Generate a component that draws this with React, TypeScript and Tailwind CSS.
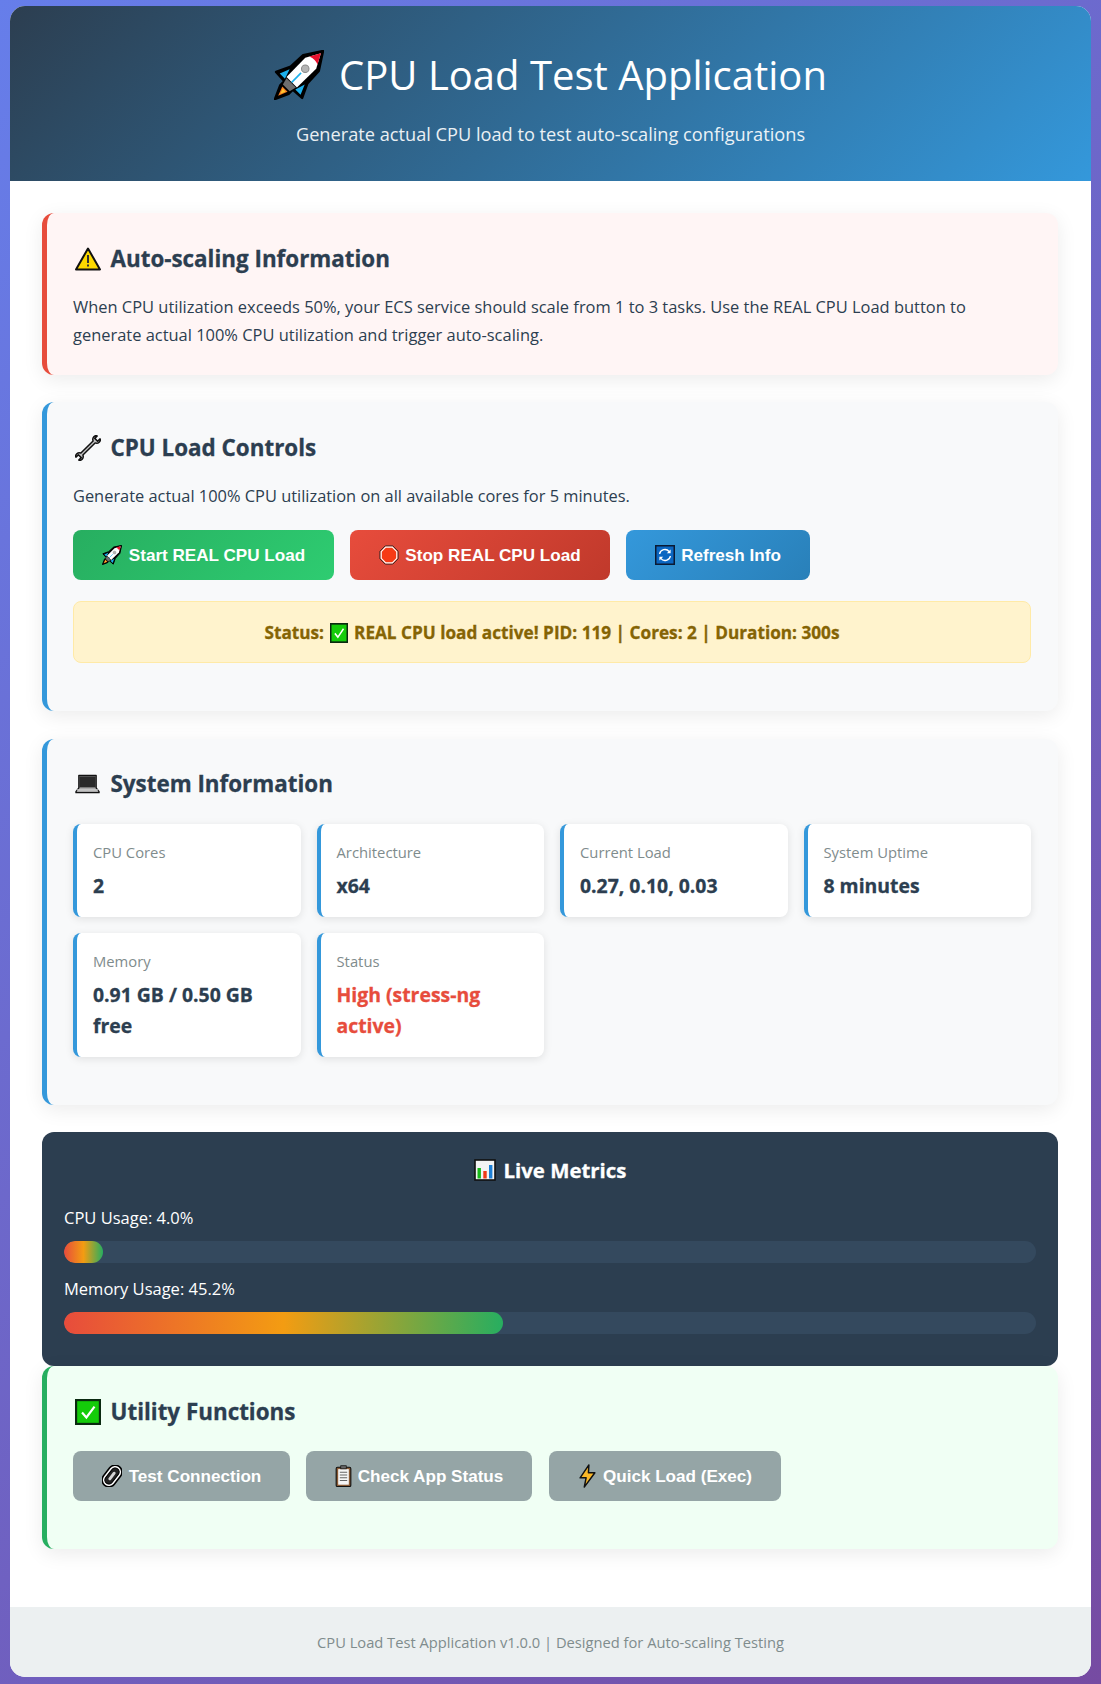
import React from "react";

type IconProps = { className?: string };

const Rocket = ({ className }: IconProps) => (
  <svg viewBox="0 0 48 48" className={className}>
    <path d="M47 1 L28 5 L16 16 L2 21 L10 30 L6 34 L1 47 L14 42 L18 38 L27 46 L32 32 L43 20 Z" fill="#000" stroke="#000" strokeWidth="2.4" strokeLinejoin="round" />
    <path d="M45 3 L30 7.5 L12 26 L22 36 L40.5 18 Z" fill="#fff" />
    <path d="M45 3 L34 6.2 Q40 9 41.8 14 Z" fill="#e8112d" />
    <path d="M15 18.5 L5.5 22.5 L10.5 27.5 Z M29.5 33 L25.5 43 L20.5 38 Z" fill="#1cb0ec" />
    <path d="M12 27 L21 36 L15 39.5 L8.5 33 Z" fill="#6e6e6e" />
    <path d="M8 35 L4 44 L13 40 Z" fill="#f47b20" />
    <path d="M8.5 37 L6 42 L11 40 Z" fill="#fdc82f" />
    <circle cx="30" cy="18" r="3.6" fill="#b5b5b5" stroke="#8a8a8a" />
    <path d="M17 31 L26 22" stroke="#1cb0ec" strokeWidth="1.6" />
  </svg>
);

const Warning = ({ className }: IconProps) => (
  <svg viewBox="0 0 26 24" className={className}>
    <path d="M13 1.5 L25 22.5 L1 22.5 Z" fill="#fcd800" stroke="#111" strokeWidth="2" strokeLinejoin="round" />
    <rect x="12" y="8" width="2" height="8" fill="#333" />
    <rect x="12" y="17.5" width="2" height="2" fill="#333" />
  </svg>
);

const Wrench = ({ className }: IconProps) => (
  <svg viewBox="0 0 26 26" className={className}>
    <g transform="rotate(45 13 13)">
      <path d="M11 -2 C8.6 -1.2 8.4 3 11.6 4.4 L11.6 21.6 C8.4 23 8.6 27.2 11 28 L11 24.6 L15 24.6 L15 28 C17.4 27.2 17.6 23 14.4 21.6 L14.4 4.4 C17.6 3 17.4 -1.2 15 -2 L15 1.4 L11 1.4 Z" fill="#c4c4c4" stroke="#111" strokeWidth="1.5" strokeLinejoin="round" />
    </g>
  </svg>
);

const Stop = ({ className }: IconProps) => (
  <svg viewBox="0 0 20 20" className={className}>
    <path d="M6.2 1 L13.8 1 L19 6.2 L19 13.8 L13.8 19 L6.2 19 L1 13.8 L1 6.2 Z" fill="#f63a16" stroke="#222" strokeWidth="1" />
    <path d="M6.7 2.2 L13.3 2.2 L17.8 6.7 L17.8 13.3 L13.3 17.8 L6.7 17.8 L2.2 13.3 L2.2 6.7 Z" fill="#f63a16" stroke="#fff" strokeWidth="1.2" />
  </svg>
);

const Refresh = ({ className }: IconProps) => (
  <svg viewBox="0 0 20 20" className={className}>
    <rect x="0.75" y="0.75" width="18.5" height="18.5" fill="#0a66c2" stroke="#0b1a33" strokeWidth="1.5" />
    <path d="M4.6 9 A5.4 5.4 0 0 1 14.2 6.6" fill="none" stroke="#fff" strokeWidth="1.4" />
    <path d="M15.6 4.4 L15.6 8.2 L11.8 8.2 Z" fill="#fff" />
    <path d="M15.4 11 A5.4 5.4 0 0 1 5.8 13.4" fill="none" stroke="#fff" strokeWidth="1.4" />
    <path d="M4.4 15.6 L4.4 11.8 L8.2 11.8 Z" fill="#fff" />
  </svg>
);

const Check = ({ className }: IconProps) => (
  <svg viewBox="0 0 24 24" preserveAspectRatio="none" className={className}>
    <rect x="1" y="1" width="22" height="22" fill="#14cc0a" stroke="#0a2a10" strokeWidth="2" />
    <path d="M6.5 12.5 L10.5 17 L18 7" fill="none" stroke="#fff" strokeWidth="2" />
  </svg>
);

const Laptop = ({ className }: IconProps) => (
  <svg viewBox="0 0 26 20" className={className}>
    <path d="M4 1 L22 1 L22 14 L25 18 L25 19 L1 19 L1 18 L4 14 Z" fill="#aaa" stroke="#111" strokeWidth="1.4" strokeLinejoin="round" />
    <rect x="4.5" y="2" width="17" height="11.5" fill="#2a2a2a" />
    <rect x="2" y="15.5" width="22" height="1.4" fill="#d0d0d0" />
  </svg>
);

const Chart = ({ className }: IconProps) => (
  <svg viewBox="0 0 22 22" className={className}>
    <rect x="1" y="1" width="20" height="20" fill="#f4f4f4" stroke="#111" strokeWidth="1.6" />
    <rect x="3.5" y="9" width="3.4" height="10.5" fill="#18b818" />
    <rect x="9.3" y="12" width="3.4" height="7.5" fill="#f03a16" />
    <rect x="15" y="6" width="3.4" height="13.5" fill="#1d7fd6" />
  </svg>
);

const Link = ({ className }: IconProps) => (
  <svg viewBox="0 0 22 24" className={className}>
    <g transform="rotate(-52 11 12)" fill="none">
      <rect x="-2" y="4.5" width="26" height="15" rx="7.5" fill="#fff" stroke="#000" strokeWidth="1.8" />
      <rect x="1" y="7.6" width="20" height="8.8" rx="4.4" fill="#222" stroke="#000" strokeWidth="1.2" />
      <rect x="5.5" y="10.4" width="11" height="3.2" rx="1.6" fill="#d5d5d5" />
    </g>
  </svg>
);

const Clipboard = ({ className }: IconProps) => (
  <svg viewBox="0 0 18 24" className={className}>
    <rect x="1" y="2.5" width="16" height="21" rx="1.5" fill="#8a5a34" stroke="#111" strokeWidth="1.2" />
    <rect x="3.2" y="4.5" width="11.6" height="17" fill="#f6f6f6" />
    <rect x="6" y="0.8" width="6" height="3.4" fill="#666" stroke="#111" strokeWidth="0.8" />
    <path d="M5 8 H13 M5 11 H13 M5 14 H13 M5 17 H13" stroke="#666" strokeWidth="1.1" />
  </svg>
);

const Bolt = ({ className }: IconProps) => (
  <svg viewBox="0 0 20 26" className={className}>
    <path d="M11.5 1 L2 15 L8.5 15 L6.5 25 L18 9.5 L11 9.5 Z" fill="#fbb827" stroke="#111" strokeWidth="1.6" strokeLinejoin="round" />
  </svg>
);

const Heading = ({ icon, children }: { icon: React.ReactNode; children: React.ReactNode }) => (
  <h2 className="flex items-center h-9 mb-[15px] text-[22.4px] leading-9 font-bold [-webkit-text-stroke:0.3px] text-[#2c3e50]">
    <span className="w-[37.5px] flex items-center pl-[2px]">{icon}</span>
    {children}
  </h2>
);

const Btn = ({ icon, label, cls }: { icon: React.ReactNode; label: string; cls: string }) => (
  <button className={`h-[50px] rounded-lg flex items-center justify-center font-['Liberation_Sans',Arial,sans-serif] font-bold text-[17.1px] text-white ${cls}`}>
    {icon}
    <span className="pt-[2px]">{label}</span>
  </button>
);

const Card = ({ label, value, red }: { label: string; value: string; red?: boolean }) => (
  <div className="bg-white rounded-lg border-l-4 border-[#3498db] pl-4 pr-3 pt-[17px] pb-[16px] shadow-[0_2px_8px_rgba(0,0,0,0.1)]">
    <div className="text-[14.8px] leading-[23px] mb-[6px] text-[#7f8c8d]">{label}</div>
    <div className={`text-[19.4px] leading-[31px] font-bold [-webkit-text-stroke:0.3px] ${red ? "text-[#e74c3c]" : "text-[#2c3e50]"}`}>{value}</div>
  </div>
);

const sectionBase = "rounded-xl border-l-[5px] shadow-[0_5px_20px_rgba(0,0,0,0.08)]";

export default function App() {
  return (
    <div className="w-full min-h-[1684px] pt-[6px] px-[10px] bg-[linear-gradient(135deg,#667eea_0%,#764ba2_100%)] font-['Open_Sans',sans-serif]">
      <div className="bg-white rounded-[15px] overflow-hidden h-[1671px] flex flex-col">
        <header className="h-[175px] shrink-0 bg-[linear-gradient(135deg,#2c3e50,#3498db)] text-white flex flex-col items-center pt-[37px]">
          <h1 className="flex items-center h-[64px] text-[40px] font-normal">
            <Rocket className="w-[50px] h-[50px] mr-[15px] -mt-[1px]" />
            CPU Load Test Application
          </h1>
          <p className="mt-[13px] text-[18.2px] leading-7 opacity-90">Generate actual CPU load to test auto-scaling configurations</p>
        </header>

        <main className="flex-1 pl-[32px] pr-[33px] pt-[32px]">
          <section className={`${sectionBase} h-[162px] bg-[#fff5f5] border-[#e74c3c] pl-[26px] pr-[60px] pt-[28px] mb-[27px]`}>
            <Heading icon={<Warning className="w-[26px] h-[24px]" />}>Auto-scaling Information</Heading>
            <p className="pt-[1px] text-[16.45px] leading-[28px] text-[#2c3e50]">
              When CPU utilization exceeds 50%, your ECS service should scale from 1 to 3 tasks. Use the REAL CPU Load button to generate actual 100% CPU utilization and trigger auto-scaling.
            </p>
          </section>

          <section className={`${sectionBase} h-[309px] bg-[#f8f9fa] border-[#3498db] pl-[26px] pr-[27px] pt-[28px] mb-[28px]`}>
            <Heading icon={<Wrench className="w-[26px] h-[26px]" />}>CPU Load Controls</Heading>
            <p className="pt-[1px] text-[16.4px] leading-[28px] text-[#2c3e50] mb-[20px]">
              Generate actual 100% CPU utilization on all available cores for 5 minutes.
            </p>
            <div className="flex gap-4">
              <Btn cls="w-[261px] bg-[linear-gradient(135deg,#27ae60,#2ecc71)]" icon={<Rocket className="w-[20px] h-[20px] mr-[7px]" />} label="Start REAL CPU Load" />
              <Btn cls="w-[260px] bg-[linear-gradient(135deg,#e74c3c,#c0392b)]" icon={<Stop className="w-[20px] h-[20px] mr-[6px]" />} label="Stop REAL CPU Load" />
              <Btn cls="w-[184px] bg-[linear-gradient(135deg,#3498db,#2980b9)]" icon={<Refresh className="w-[20px] h-[20px] mr-[6px]" />} label="Refresh Info" />
            </div>
            <div className="mt-[21px] pt-[2px] h-[62px] rounded-lg border border-[#ffeaa7] bg-[#fff3cd] flex items-center justify-center text-[17.2px] font-bold [-webkit-text-stroke:0.3px] text-[#856404]">
              Status:
              <Check className="w-[18px] h-[20px] mx-[6px]" />
              REAL CPU load active! PID: 119 | Cores: 2 | Duration: 300s
            </div>
          </section>

          <section className={`${sectionBase} h-[366px] bg-[#f8f9fa] border-[#3498db] pl-[26px] pr-[27px] pt-[27px] mb-[27px]`}>
            <Heading icon={<Laptop className="w-[25px] h-[20px]" />}>System Information</Heading>
            <div className="grid grid-cols-4 gap-x-[16px] gap-y-[16px] pt-[7px]">
              <Card label="CPU Cores" value="2" />
              <Card label="Architecture" value="x64" />
              <Card label="Current Load" value="0.27, 0.10, 0.03" />
              <Card label="System Uptime" value="8 minutes" />
              <Card label="Memory" value="0.91 GB / 0.50 GB free" />
              <Card label="Status" value="High (stress-ng active)" red />
            </div>
          </section>

          <section className="h-[234px] rounded-xl bg-[#2c3e50] text-white px-[22px] pt-[22px]">
            <h3 className="flex items-center justify-center h-8 text-[20.4px] font-bold [-webkit-text-stroke:0.3px]">
              <Chart className="w-[22px] h-[22px] mr-[8px]" />
              Live Metrics
            </h3>
            <div className="mt-[18px] text-[16.5px] leading-[28px]">CPU Usage: 4.0%</div>
            <div className="mt-[9px] h-[22px] rounded-full bg-[#34495e] overflow-hidden">
              <div className="h-full rounded-full bg-[linear-gradient(90deg,#e74c3c,#f39c12,#27ae60)]" style={{ width: "4%" }} />
            </div>
            <div className="mt-[12px] text-[16.5px] leading-[28px]">Memory Usage: 45.2%</div>
            <div className="mt-[9px] h-[22px] rounded-full bg-[#34495e] overflow-hidden">
              <div className="h-full rounded-full bg-[linear-gradient(90deg,#e74c3c,#f39c12,#27ae60)]" style={{ width: "45.2%" }} />
            </div>
          </section>

          <section className={`${sectionBase} h-[183px] bg-[#f0fff4] border-[#27ae60] pl-[26px] pr-[27px] pt-[28px]`}>
            <Heading icon={<Check className="w-[26px] h-[26px]" />}>Utility Functions</Heading>
            <div className="flex gap-4 pt-[6px]">
              <Btn cls="w-[217px] bg-[#95a5a6]" icon={<Link className="w-[20px] h-[22px] mr-[7px]" />} label="Test Connection" />
              <Btn cls="w-[226px] bg-[#95a5a6] mr-[1px]" icon={<Clipboard className="w-[17px] h-[22px] mr-[6px]" />} label="Check App Status" />
              <Btn cls="w-[232px] bg-[#95a5a6]" icon={<Bolt className="w-[19px] h-[24px] mr-[6px]" />} label="Quick Load (Exec)" />
            </div>
          </section>
        </main>

        <footer className="h-[70px] shrink-0 pt-[1px] bg-[#ecf0f1] flex items-center justify-center text-[14.7px] text-[#7f8c8d]">
          CPU Load Test Application v1.0.0 | Designed for Auto-scaling Testing
        </footer>
      </div>
    </div>
  );
}
